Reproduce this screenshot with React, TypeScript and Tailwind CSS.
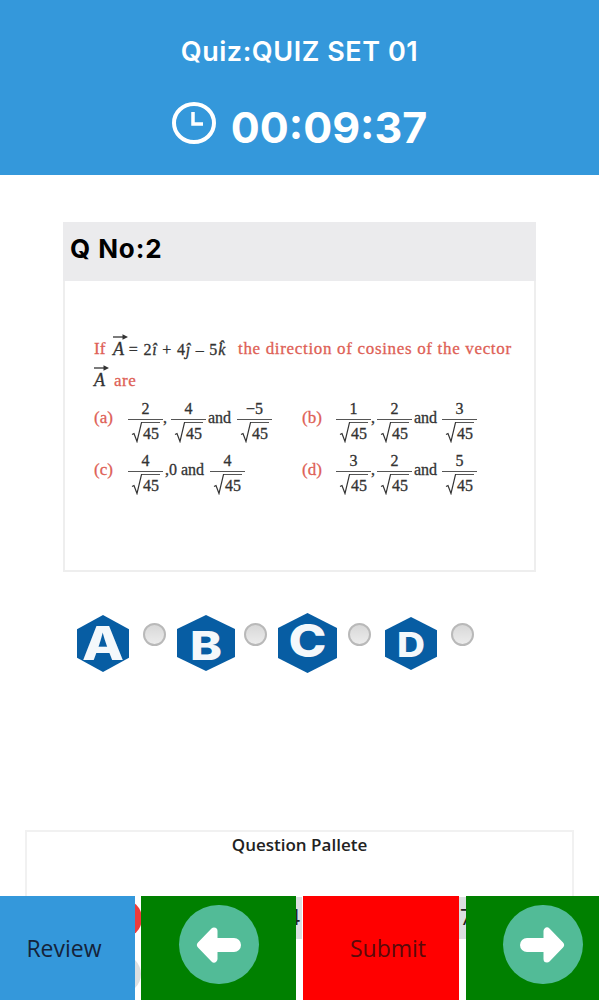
import { ReactNode } from 'react';

const SANS = "font-['Inter',sans-serif]";

function Frac({ top }: { top: string }) {
  return (
    <span className="inline-flex flex-col items-center w-[35px] leading-none text-[16px] text-[#333]">
      <span className="h-[21px] leading-[21px]">{top}</span>
      <span className="w-full border-t border-[#555] flex justify-center pt-[2px] h-[24px]">
        <svg width="11" height="21" viewBox="0 0 11 21" className="shrink-0" fill="none" stroke="#333">
          <path d="M1 12.5L3 11.5L6 19.5L10.5 0.6H11" strokeWidth="1.2" />
        </svg>
        <span className="border-t border-[#555] h-[21px] leading-[21px] px-[1px]">45</span>
      </span>
    </span>
  );
}

function Vec({ children }: { children: ReactNode }) {
  return (
    <span className="relative inline-block italic text-[#333] text-[18px]">
      <svg className="absolute left-0 -top-[5px] w-[15px] h-[8px]" viewBox="0 0 15 8">
        <path d="M0 4H13" stroke="#333" strokeWidth="1.3" />
        <path d="M15 4L9.5 1.2V6.8Z" fill="#333" />
      </svg>
      {children}
    </span>
  );
}

// sits a little above the fraction bars' centre line, like "and" in the picture
function Word({ children, className }: { children: ReactNode; className?: string }) {
  return <span className={`-mt-[5px] text-[16px] text-[#333] whitespace-nowrap ${className ?? ''}`}>{children}</span>;
}

function Option({ label, children }: { label: string; children: ReactNode }) {
  return (
    <div className="flex items-center h-[52px]">
      <span className="w-[34px] -mt-[5px] text-[#de5f56] text-[17px]">{label}</span>
      <div className="flex items-center">{children}</div>
    </div>
  );
}

function Hex({ letter, w, h, size, base, len }: { letter: string; w: number; h: number; size: number; base: number; len: number }) {
  const q = h / 4;
  return (
    <svg width={w} height={h} viewBox={`0 0 ${w} ${h}`} className="shrink-0">
      <path d={`M${w / 2} 0L${w} ${q}V${h - q}L${w / 2} ${h}L0 ${h - q}V${q}Z`} fill="#075da3" />
      <text
        x={w / 2}
        y={base}
        textAnchor="middle"
        fill="#f4f8fb"
        fontFamily="Inter, sans-serif"
        fontWeight="800"
        fontSize={size}
        textLength={len}
        lengthAdjust="spacingAndGlyphs"
      >
        {letter}
      </text>
    </svg>
  );
}

function Radio() {
  return (
    <span className="block w-[23px] h-[23px] rounded-full border-2 border-[#b9b9b9] bg-gradient-to-b from-[#d8d8d8] to-[#ececec] mb-[18px]" />
  );
}

function ArrowBtn({ flip }: { flip?: boolean }) {
  return (
    <span className="flex items-center justify-center w-[80px] h-[79px] rounded-full bg-[#52bb97]">
      <svg width="45" height="36" viewBox="0 0 45 36" className={flip ? 'rotate-180' : ''}>
        <path d="M18 4L4.5 18L18 32Z" fill="#fff" stroke="#fff" strokeWidth="7" strokeLinejoin="round" />
        <path d="M18 18H38" stroke="#fff" strokeWidth="14" strokeLinecap="round" />
      </svg>
    </span>
  );
}

export default function App() {
  return (
    <div className={`relative h-[1000px] overflow-hidden bg-white ${SANS}`}>
      {/* Header */}
      <div className="h-[175px] bg-[#3498db] flex flex-col items-center text-white">
        <p className="mt-[34px] text-[27px] leading-[36px] font-semibold tracking-[0.55px]">Quiz:QUIZ SET 01</p>
        <div className="flex items-center mt-[28px] gap-[15px]">
          <svg width="44" height="42" viewBox="0 0 44 42" fill="none" stroke="#fff" className="-mt-[9px]">
            <ellipse cx="22" cy="21" rx="20" ry="19" strokeWidth="4" />
            <path d="M21 10V22H31" strokeWidth="3.5" />
          </svg>
          <span className="text-[43px] leading-[58px] font-bold">00:09:37</span>
        </div>
      </div>

      {/* Question card */}
      <div className="mt-[47px] mx-[63px] h-[350px] border-2 border-[#eeeeee] border-t-0">
        <div className="-mx-[2px] h-[59px] bg-[#ebebed] flex items-center px-[7px] pb-[6px]">
          <p className="text-[26px] font-bold text-black tracking-[0.9px]">Q No:2</p>
        </div>
        <div className="pl-[29px] pt-[57px] font-['Liberation_Serif',serif] text-[#de5f56] text-[17px] [-webkit-text-stroke:0.3px_currentColor]">
          <div className="flex whitespace-nowrap leading-[22px]">
            <span className="w-[19px]">If</span>
            <span className="w-[125px]">
              <Vec>A</Vec>
              <span className="text-[#333] text-[16px] tracking-[0.8px]"> = 2<i>î</i> + 4<i>ĵ</i> – 5<i>k̂</i></span>
            </span>
            <span className="tracking-[0.67px]">the direction of cosines of the vector</span>
          </div>
          <div className="mt-[8px] leading-[22px] whitespace-nowrap">
            <Vec>A</Vec>
            <span className="ml-[9px] tracking-[0.5px]">are</span>
          </div>
          <div className="grid grid-cols-[208px_1fr] mt-[2px]">
            <Option label="(a)">
              <Frac top="2" /><Word className="w-[8px]">,</Word><Frac top="4" /><Word className="ml-[2px] w-[29px]">and</Word><Frac top="−5" />
            </Option>
            <Option label="(b)">
              <Frac top="1" /><Word className="w-[6px]">,</Word><Frac top="2" /><Word className="ml-[2px] w-[28px]">and</Word><Frac top="3" />
            </Option>
            <Option label="(c)">
              <Frac top="4" /><Word className="ml-[2px] w-[45px]">,0 and</Word><Frac top="4" />
            </Option>
            <Option label="(d)">
              <Frac top="3" /><Word className="w-[6px]">,</Word><Frac top="2" /><Word className="ml-[2px] w-[28px]">and</Word><Frac top="5" />
            </Option>
          </div>
        </div>
      </div>

      {/* Answer choices */}
      <div className="flex items-center mt-[41px] ml-[77px] h-[60px]">
        <Hex letter="A" w={52} h={57} size={47} base={45} len={42} />
        <span className="ml-[14px] mr-[11px]"><Radio /></span>
        <Hex letter="B" w={58} h={56} size={40} base={45} len={32} />
        <span className="ml-[9px] mr-[11px]"><Radio /></span>
        <Hex letter="C" w={59} h={60} size={45} base={44} len={38} />
        <span className="ml-[11px] mr-[14px]"><Radio /></span>
        <Hex letter="D" w={52} h={53} size={34} base={40} len={28} />
        <span className="ml-[14px]"><Radio /></span>
      </div>

      {/* Palette, mostly hidden under the bottom bar */}
      <div className="absolute left-[25px] top-[830px] w-[549px] h-[170px] border-2 border-[#f1f1f1] border-b-0">
        <p className="text-center text-[17px] leading-[26px] font-['Open_Sans',sans-serif] font-semibold text-[#222]">Question Pallete</p>
      </div>
      <span className="absolute left-[103px] top-[899px] w-[39px] h-[39px] rounded-full bg-[#ee3b3b]" />
      <span className="absolute left-[103px] top-[955px] w-[38px] h-[38px] rounded-full bg-[#dcdfe1]" />
      <span className="absolute left-[262px] top-[897px] w-[40px] h-[42px] bg-[#dcdfe1] flex items-center justify-end pr-[2px] text-[21px] text-[#222] font-['Open_Sans',sans-serif]">4</span>
      <span className="absolute left-[440px] top-[897px] w-[40px] h-[42px] bg-[#dcdfe1] flex items-center pl-[20px] text-[21px] text-[#222] font-['Open_Sans',sans-serif]">7</span>

      {/* Bottom bar */}
      <div className="absolute left-0 right-0 top-[896px] h-[104px] flex font-['Open_Sans',sans-serif] text-[23px]">
        <div className="w-[135px] bg-[#3498db] flex items-center justify-center text-[#14233a] pr-[7px]">Review</div>
        <div className="ml-[6px] w-[155px] bg-[#008000] flex justify-center pt-[9px]"><ArrowBtn /></div>
        <div className="ml-[7px] w-[156px] bg-[#ff0000] flex items-center justify-center text-[#5a0a0a] pl-[14px]">Submit</div>
        <div className="ml-[7px] flex-1 bg-[#008000] flex justify-center pt-[9px] pl-[20px]"><ArrowBtn flip /></div>
      </div>
    </div>
  );
}
